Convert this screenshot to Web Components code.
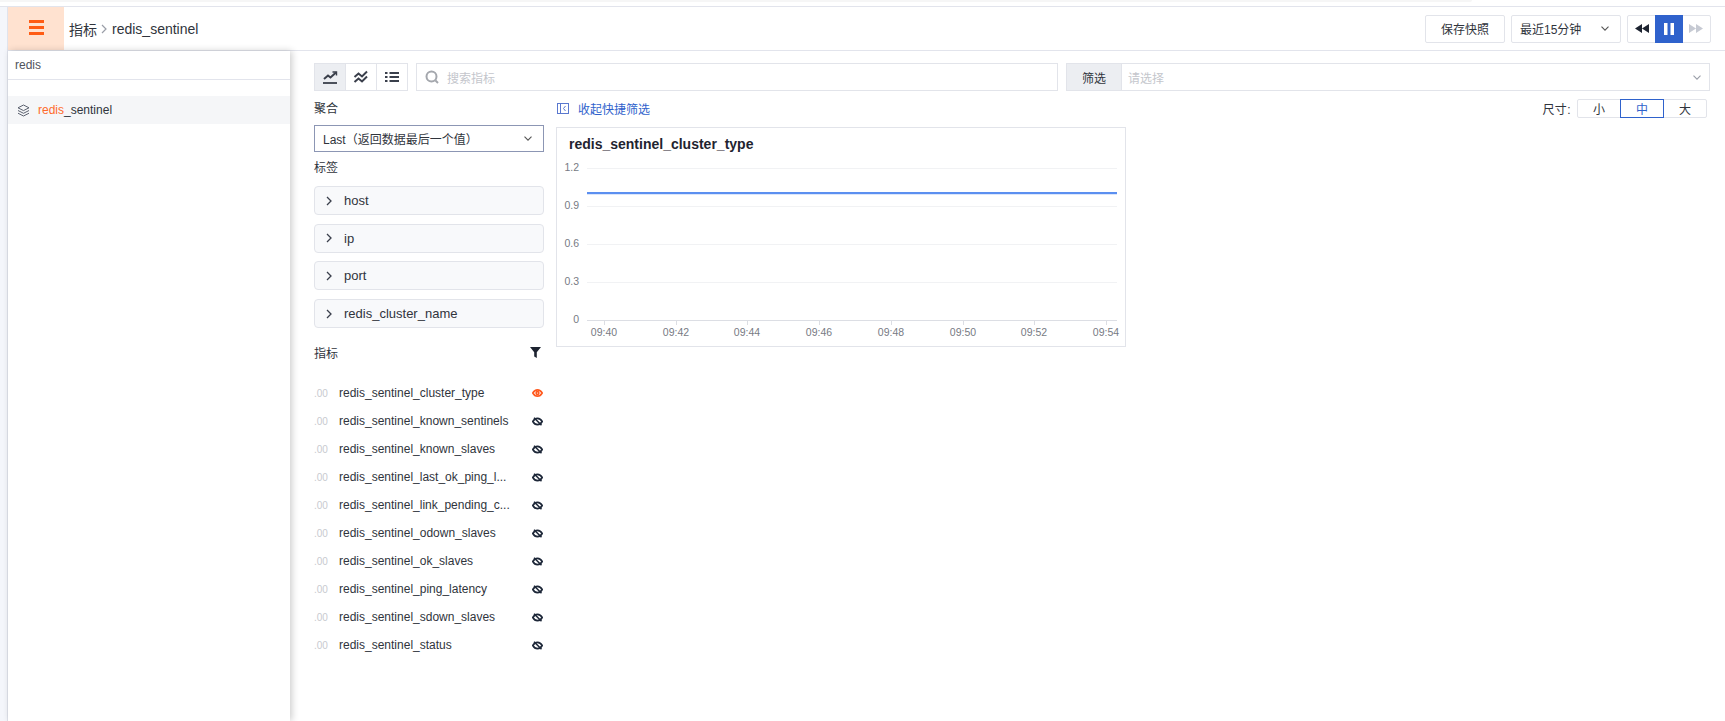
<!DOCTYPE html>
<html lang="zh">
<head>
<meta charset="utf-8">
<title>redis_sentinel</title>
<style>
html, body { margin: 0; height: 100%; overflow: hidden; background: #fff; }
body { font-family: "Liberation Sans", "Noto Sans CJK SC", sans-serif; font-size: 12px; color: #30343c; }
</style>
</head>
<body>
<app-shell></app-shell>
<script>
const CHEVRON = '<svg width="8" height="5" viewBox="0 0 8 5" fill="none" stroke="currentColor" stroke-width="1.1"><path d="M.5 .7L4 4.200 7.500 .7"/></svg>'

const topBarTemplate = document.createElement('template')
topBarTemplate.innerHTML = `
<style>
:host { display: flex; height: 43px; align-items: center; border-bottom: 1px solid #e2e4ec; box-sizing: content-box; background: #fff; }
.menu { width: 56px; height: 43px; background: #ffe2d0; display: flex; align-items: center; justify-content: center; }
.menu svg { margin-bottom: 2px; }
.crumb { flex: 1; display: flex; align-items: center; margin-left: 5px; font-size: 14px; color: #30343c; }
.crumb svg { margin: 0 5px 0 4px; }
.actions { display: flex; gap: 6px; margin-right: 14px; }
.btn { height: 28px; box-sizing: border-box; border: 1px solid #e2e4ea; border-radius: 2px; display: flex; align-items: center; font-size: 12px; color: #30343c; background: #fff; }
.save { width: 80px; justify-content: center; }
.range { width: 110px; padding: 0 11px 0 8px; justify-content: space-between; }
.range svg { color: #555; }
.play { width: 84px; align-items: stretch; }
.play span { flex: 1; display: flex; align-items: center; justify-content: center; }
.play .on { background: #2f62cc; margin: -1px 0; }
</style>
<div class="menu">
  <svg width="15" height="15" viewBox="0 0 15 15" fill="#ff5c14"><rect width="15" height="3"/><rect y="6" width="15" height="3"/><rect y="12" width="15" height="3"/></svg>
</div>
<div class="crumb">指标<svg width="6" height="10" viewBox="0 0 6 10" fill="none" stroke="#9a9ea8" stroke-width="1.2"><path d="M1 1l4 4-4 4"/></svg><span class="leaf">redis_sentinel</span></div>
<div class="actions">
  <div class="btn save">保存快照</div>
  <div class="btn range"><span>最近15分钟</span>${CHEVRON}</div>
  <div class="btn play">
    <span><svg width="14" height="9" viewBox="0 0 14 9" fill="#1d2330"><path d="M7 0v9L0 4.500zM14 0v9L7 4.500z"/></svg></span>
    <span class="on"><svg width="10" height="12" viewBox="0 0 10 12" fill="#fff"><rect width="3.500" height="12"/><rect x="6.500" width="3.500" height="12"/></svg></span>
    <span><svg width="14" height="9" viewBox="0 0 14 9" fill="#c6cad3"><path d="M0 0v9l7-4.500zM7 0v9l7-4.500z"/></svg></span>
  </div>
</div>
`
customElements.define('top-bar', class extends HTMLElement {
  constructor () {
    super()
    this.attachShadow({ mode: 'open' }).appendChild(topBarTemplate.content.cloneNode(true))
  }
})

const sideNavTemplate = document.createElement('template')
sideNavTemplate.innerHTML = `
<style>
:host { display: block; width: 282px; background: #fff; box-shadow: 2px 0 7px rgba(0,0,0,.2); position: relative; font-size: 12px; }
.search { height: 28px; line-height: 28px; padding-left: 7px; border-bottom: 1px solid #e2e4ec; color: #50535c; }
.item { margin-top: 16px; height: 28px; background: #f5f6f8; display: flex; align-items: center; padding-left: 9px; font-size: 12px; color: #30343c; }
.item svg { margin-right: 8px; }
.hit { color: #ff6a2b; }
</style>
<div class="search">redis</div>
<div class="item">
  <svg width="13" height="13" viewBox="0 0 13 13" fill="none" stroke="#5c6270" stroke-width="1"><path d="M6.500 1L12 3.800 6.500 6.600 1 3.800z"/><path d="M1 6.500l5.500 2.800L12 6.500"/><path d="M1 9.200L6.500 12 12 9.200"/></svg>
  <span><span class="hit">redis</span>_sentinel</span>
</div>
`
customElements.define('side-nav', class extends HTMLElement {
  constructor () {
    super()
    this.attachShadow({ mode: 'open' }).appendChild(sideNavTemplate.content.cloneNode(true))
  }
})

const toolBarTemplate = document.createElement('template')
toolBarTemplate.innerHTML = `
<style>
:host { display: flex; height: 28px; gap: 8px; }
.views { width: 94px; display: flex; border: 1px solid #e2e4ea; box-sizing: border-box; }
.views span { flex: 1; display: flex; align-items: center; justify-content: center; border-left: 1px solid #e2e4ea; }
.views span:first-child { border-left: 0; background: #eceef2; }
.find { width: 642px; box-sizing: border-box; border: 1px solid #e2e4ea; display: flex; align-items: center; padding-left: 8px; color: #c4c6cc; font-size: 12px; }
.find svg { margin-right: 8px; }
.filter { width: 644px; box-sizing: border-box; border: 1px solid #e2e4ea; display: flex; align-items: center; font-size: 12px; color: #c4c6cc; }
.filter b { font-weight: 400; width: 55px; height: 100%; background: #eceef2; color: #30343c; display: flex; align-items: center; justify-content: center; border-right: 1px solid #e2e4ea; box-sizing: border-box; }
.filter .ph { flex: 1; padding-left: 6px; }
.filter svg { margin-right: 8px; color: #9a9ea8; }
</style>
<div class="views">
  <span><svg width="16" height="14" viewBox="0 0 16 14" fill="none" stroke="#3a3f4b" stroke-width="2"><path d="M2 9l4-3.500 2.500 2L14 2.500"/><path d="M10.500 2H14.500V5.500" stroke-width="1.400"/><path d="M1 13h14" stroke-width="1.800"/></svg></span>
  <span><svg width="16" height="14" viewBox="0 0 16 14" fill="none" stroke="#3a3f4b" stroke-width="2"><path d="M1.500 7L5.500 3.500 9 6.500 14 1.500"/><path d="M1.500 12L5.500 8.500 9 11.500 14 6.500"/></svg></span>
  <span><svg width="14" height="12" viewBox="0 0 14 12" fill="#3a3f4b"><rect y="1" width="2.500" height="2"/><rect x="4.500" y="1" width="9.500" height="2"/><rect y="5" width="2.500" height="2"/><rect x="4.500" y="5" width="9.500" height="2"/><rect y="9" width="2.500" height="2"/><rect x="4.500" y="9" width="9.500" height="2"/></svg></span>
</div>
<div class="find">
  <svg width="14" height="14" viewBox="0 0 14 14" fill="none" stroke="#a4a7ad" stroke-width="2"><circle cx="6.500" cy="6.500" r="5"/><path d="M10.500 10.500l2.500 2.500"/></svg>
  搜索指标
</div>
<div class="filter"><b>筛选</b><span class="ph">请选择</span>${CHEVRON}</div>
`
customElements.define('tool-bar', class extends HTMLElement {
  constructor () {
    super()
    this.attachShadow({ mode: 'open' }).appendChild(toolBarTemplate.content.cloneNode(true))
  }
})

const tagRowTemplate = document.createElement('template')
tagRowTemplate.innerHTML = `
<style>
:host { display: flex; height: 29px; box-sizing: border-box; align-items: center; background: #f8f9fb; border: 1px solid #e2e4ea; border-radius: 4px; font-size: 13px; color: #30343c; padding-left: 11px; }
svg { margin-right: 12px; }
</style>
<svg width="6" height="10" viewBox="0 0 6 10" fill="none" stroke="#3a3f4b" stroke-width="1.300"><path d="M1 1l4 4-4 4"/></svg><slot></slot>
`
customElements.define('tag-row', class extends HTMLElement {
  constructor () {
    super()
    this.attachShadow({ mode: 'open' }).appendChild(tagRowTemplate.content.cloneNode(true))
  }
})

const metricRowTemplate = document.createElement('template')
metricRowTemplate.innerHTML = `
<style>
:host { display: flex; height: 28px; align-items: center; font-size: 12px; color: #30343c; }
.unit { width: 25px; font-size: 10px; color: #c8cacf; }
.name { flex: 1; }
svg { margin-right: 1px; display: block; }
</style>
<span class="unit">.00</span><span class="name"><slot></slot></span><span class="eye"></span>
`
const EYE_ON = '<svg width="11" height="8" viewBox="0 0 11 8" fill="none" stroke="#ff5a1f" stroke-width="1.600"><path d="M.8 4C2 1.800 3.600.9 5.500.9S9 1.800 10.200 4C9 6.200 7.400 7.100 5.500 7.100S2 6.200.8 4z"/><circle cx="5.500" cy="4" r="1.400"/></svg>'
const EYE_OFF = '<svg width="11" height="9" viewBox="0 0 11 9" fill="none" stroke="#1d2738" stroke-width="1.600"><path d="M.8 4.500C2 2.300 3.600 1.400 5.500 1.400S9 2.300 10.200 4.500C9 6.700 7.400 7.600 5.500 7.600S2 6.700.8 4.500z"/><path d="M2 .8l7.500 7.500"/></svg>'
customElements.define('metric-row', class extends HTMLElement {
  constructor () {
    super()
    this.attachShadow({ mode: 'open' }).appendChild(metricRowTemplate.content.cloneNode(true))
    this.shadowRoot.querySelector('.eye').innerHTML = this.hasAttribute('visible') ? EYE_ON : EYE_OFF
  }
})

const filterPanelTemplate = document.createElement('template')
filterPanelTemplate.innerHTML = `
<style>
:host { display: block; width: 230px; flex: none; font-size: 12px; color: #30343c; }
.label { height: 20px; line-height: 20px; }
.select { margin-top: 6px; height: 27px; box-sizing: border-box; border: 1px solid #8c96b4; display: flex; align-items: center; justify-content: space-between; padding: 0 11px 0 8px; }
.select svg { color: #555; }
.tags-label { margin-top: 6px; margin-bottom: 8px; }
.tags { display: flex; flex-direction: column; gap: 8.700px; }
.head { margin-top: 10px; margin-bottom: 13px; display: flex; align-items: center; justify-content: space-between; padding-right: 3px; height: 28px; }
</style>
<div class="label">聚合</div>
<div class="select"><span>Last（返回数据最后一个值）</span>${CHEVRON}</div>
<div class="label tags-label">标签</div>
<div class="tags"><slot name="tags"></slot></div>
<div class="head"><span>指标</span>
  <svg width="11" height="11" viewBox="0 0 11 11" fill="#1d2330"><path d="M0 0h11L6.800 5.200V11L4.200 9.500V5.200z"/></svg>
</div>
<slot name="metrics"></slot>
`
customElements.define('filter-panel', class extends HTMLElement {
  constructor () {
    super()
    this.attachShadow({ mode: 'open' }).appendChild(filterPanelTemplate.content.cloneNode(true))
  }
})

const chartCardTemplate = document.createElement('template')
chartCardTemplate.innerHTML = `
<style>
:host { display: block; width: 570px; height: 220px; box-sizing: border-box; border: 1px solid #e2e4ea; background: #fff; }
.title { font-size: 14px; font-weight: 700; color: #1f2430; padding: 7px 0 0 12px; height: 21px; line-height: 18px; }
svg { display: block; }
text { font-family: "Liberation Sans", sans-serif; font-size: 10.500px; fill: #777b84; }
</style>
<div class="title"><slot></slot></div>
<svg class="plot" width="568" height="190" viewBox="0 0 568 190"></svg>
`
customElements.define('chart-card', class extends HTMLElement {
  constructor () {
    super()
    this.attachShadow({ mode: 'open' }).appendChild(chartCardTemplate.content.cloneNode(true))
    // plot area: x 30..560, y 12..164 (svg starts 29px under the card's top)
    const y = [[12, '1.2'], [50, '0.9'], [88, '0.6'], [126, '0.3'], [164, '0']]
    const x = [[47, '09:40'], [119, '09:42'], [190, '09:44'], [262, '09:46'], [334, '09:48'], [406, '09:50'], [477, '09:52'], [549, '09:54']]
    let svg = ''
    for (const [py, label] of y) {
      const stroke = py === 164 ? '#dcdee4' : '#f1f2f4'
      svg += `<path d="M30 ${py + 0.5}H560" stroke="${stroke}"/>`
      svg += `<text x="22" y="${py + 3}" text-anchor="end">${label}</text>`
    }
    for (const [px, label] of x) {
      svg += `<path d="M${px + 0.5} 164v5" stroke="#dcdee4"/>`
      svg += `<text x="${px}" y="180" text-anchor="middle">${label}</text>`
    }
    svg += '<path d="M30 38.500H560" stroke="#dbe6fb"/>'
    svg += '<path d="M30 37H560" stroke="#5b8ff0" stroke-width="2"/>'
    this.shadowRoot.querySelector('.plot').innerHTML = svg
  }
})

const sizePickerTemplate = document.createElement('template')
sizePickerTemplate.innerHTML = `
<style>
:host { display: flex; align-items: center; font-size: 12px; color: #30343c; gap: 6px; }
.seg { display: flex; width: 130px; height: 19px; box-sizing: border-box; border: 1px solid #e2e4ea; border-radius: 2px; }
.seg span { flex: 1; display: flex; align-items: center; justify-content: center; }
.seg .on { border: 1px solid #2f62cc; margin: -1px 0; color: #2f62cc; }
.cap { letter-spacing: .4px; }
</style>
<span class="cap">尺寸:</span>
<div class="seg"><span>小</span><span class="on">中</span><span>大</span></div>
`
customElements.define('size-picker', class extends HTMLElement {
  constructor () {
    super()
    this.attachShadow({ mode: 'open' }).appendChild(sizePickerTemplate.content.cloneNode(true))
  }
})

const appShellTemplate = document.createElement('template')
appShellTemplate.innerHTML = `
<style>
:host { display: flex; height: 721px; width: 1725px; background: #fff; overflow: hidden; flex-direction: column; }
.tabline { height: 2px; width: 1472px; background: #f6f6f6; border-radius: 0 0 8px 0; flex: none; }
.gap { height: 4px; flex: none; }
.frame { flex: 1; display: flex; min-height: 0; border-top: 1px solid #e2e4ec; }
.rail { width: 7px; flex: none; background: #f4f6fb; border-right: 1px solid #e0e3ec; }
.page { flex: 1; display: flex; flex-direction: column; min-width: 0; }
.body { flex: 1; display: flex; min-height: 0; }
.main { flex: 1; padding: 12px 15px 0 24px; min-width: 0; }
.content { display: flex; gap: 12px; margin-top: 8px; }
.right { flex: 1; min-width: 0; }
.bar { display: flex; justify-content: space-between; align-items: center; height: 19px; padding-right: 3px; margin-bottom: 9px; }
.fold { display: flex; align-items: center; gap: 9px; color: #2f62cc; font-size: 12px; margin: -1px 0 0 1px; }
</style>
<div class="tabline"></div>
<div class="gap"></div>
<div class="frame">
  <div class="rail"></div>
  <div class="page">
    <top-bar></top-bar>
    <div class="body">
      <side-nav></side-nav>
      <div class="main">
        <tool-bar></tool-bar>
        <div class="content">
          <filter-panel>
            <tag-row slot="tags">host</tag-row>
            <tag-row slot="tags">ip</tag-row>
            <tag-row slot="tags">port</tag-row>
            <tag-row slot="tags">redis_cluster_name</tag-row>
            <metric-row slot="metrics" visible>redis_sentinel_cluster_type</metric-row>
            <metric-row slot="metrics">redis_sentinel_known_sentinels</metric-row>
            <metric-row slot="metrics">redis_sentinel_known_slaves</metric-row>
            <metric-row slot="metrics">redis_sentinel_last_ok_ping_l...</metric-row>
            <metric-row slot="metrics">redis_sentinel_link_pending_c...</metric-row>
            <metric-row slot="metrics">redis_sentinel_odown_slaves</metric-row>
            <metric-row slot="metrics">redis_sentinel_ok_slaves</metric-row>
            <metric-row slot="metrics">redis_sentinel_ping_latency</metric-row>
            <metric-row slot="metrics">redis_sentinel_sdown_slaves</metric-row>
            <metric-row slot="metrics">redis_sentinel_status</metric-row>
          </filter-panel>
          <div class="right">
            <div class="bar">
              <div class="fold">
                <svg width="12" height="11" viewBox="0 0 12 11" fill="none" stroke="#5a78cf"><rect x=".5" y=".5" width="11" height="10"/><path d="M3.500 1v9"/><path d="M8.500 3L6.500 5.500 8.500 8"/></svg>
                <span>收起快捷筛选</span>
              </div>
              <size-picker></size-picker>
            </div>
            <chart-card>redis_sentinel_cluster_type</chart-card>
          </div>
        </div>
      </div>
    </div>
  </div>
</div>
`
customElements.define('app-shell', class extends HTMLElement {
  constructor () {
    super()
    this.attachShadow({ mode: 'open' }).appendChild(appShellTemplate.content.cloneNode(true))
  }
})
</script>
</body>
</html>
